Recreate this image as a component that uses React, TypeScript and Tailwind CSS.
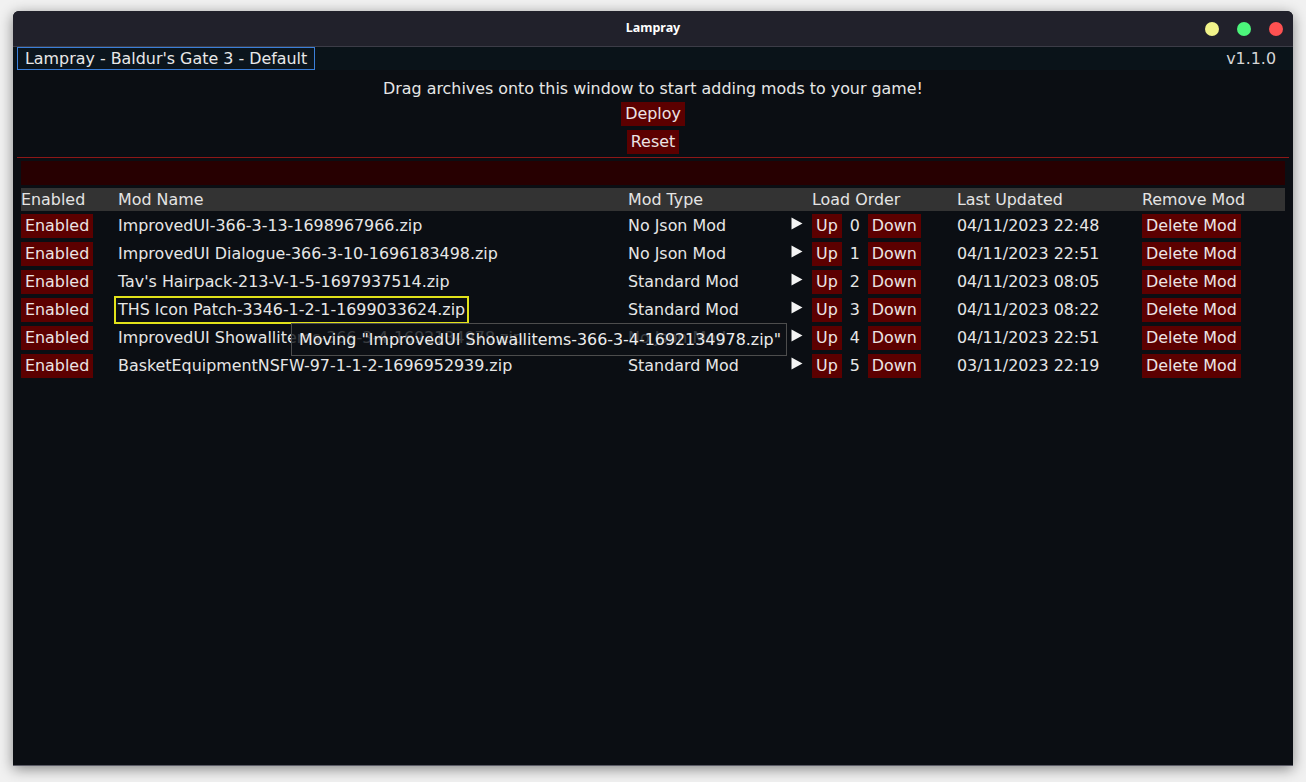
import React from "react";

const rows = [
  { name: "ImprovedUI-366-3-13-1698967966.zip", type: "No Json Mod", order: 0, date: "04/11/2023 22:48" },
  { name: "ImprovedUI Dialogue-366-3-10-1696183498.zip", type: "No Json Mod", order: 1, date: "04/11/2023 22:51" },
  { name: "Tav's Hairpack-213-V-1-5-1697937514.zip", type: "Standard Mod", order: 2, date: "04/11/2023 08:05" },
  { name: "THS Icon Patch-3346-1-2-1-1699033624.zip", type: "Standard Mod", order: 3, date: "04/11/2023 08:22" },
  { name: "ImprovedUI Showallitems-366-3-4-1692134978.zip", type: "No Json Mod", order: 4, date: "04/11/2023 22:51" },
  { name: "BasketEquipmentNSFW-97-1-1-2-1696952939.zip", type: "Standard Mod", order: 5, date: "03/11/2023 22:19" },
];

function Btn({ children }: { children: React.ReactNode }) {
  return (
    <span className="h-[24px] px-[4px] flex items-center bg-[#5c0000] text-[#ece4e4] whitespace-nowrap leading-none">
      {children}
    </span>
  );
}

const cols = "grid grid-cols-[97px_510px_163px_21px_145px_185px_143px]";

export default function App() {
  return (
    <div
      className="w-[1306px] h-[782px] bg-[#f1f1f1] pt-[11px] pl-[13px] overflow-hidden"
      style={{ fontFamily: '"DejaVu Sans", "Liberation Sans", sans-serif' }}
    >
      <div className="w-[1280px] h-[755px] rounded-t-[6px] bg-[#0b0e13] shadow-[0_3px_14px_rgba(0,0,0,0.45)] border-b border-[#5b5b66] flex flex-col overflow-hidden">
        {/* title bar */}
        <div className="h-[36px] bg-[#21212b] border-b border-[#3c3c47] relative flex items-center justify-center shrink-0">
          <span
            className="text-white text-[12.5px] font-bold"
            style={{ fontFamily: '"Noto Sans", Inter, sans-serif' }}
          >
            Lampray
          </span>
          <div className="absolute right-[10px] top-[11px] flex gap-[18px]">
            <span className="w-[14px] h-[14px] rounded-full bg-[#f1f38a]" />
            <span className="w-[14px] h-[14px] rounded-full bg-[#4cf57b]" />
            <span className="w-[14px] h-[14px] rounded-full bg-[#fe5151]" />
          </div>
        </div>

        {/* tab / menu bar */}
        <div className="h-[23px] bg-[#0a1319] flex items-stretch justify-between pl-[4px] pr-[17px] text-[15.9px] shrink-0">
          <div className="h-[23px] border border-[#3b7fd9] bg-[#0b151d] px-[7px] flex items-center text-[#e8e8e8] leading-none">
            Lampray - Baldur's Gate 3 - Default
          </div>
          <div className="flex items-center text-[#d6d6d6] leading-none">v1.1.0</div>
        </div>

        {/* body */}
        <div className="flex flex-col text-[15.9px] text-[#e6e6e6]">
          <div className="flex justify-center mt-[10px] h-[18px] items-center leading-none">
            Drag archives onto this window to start adding mods to your game!
          </div>
          <div className="flex justify-center mt-[4px]">
            <Btn>Deploy</Btn>
          </div>
          <div className="flex justify-center mt-[4px]">
            <Btn>Reset</Btn>
          </div>
          <div className="mx-[4px] mt-[3px] h-[1px] bg-[#8e1717]" />
          <div className="mx-[8px] mt-[3px] h-[24px] bg-[#270001]" />

          <div className="mx-[8px] mt-[3px] relative">
            {/* header */}
            <div className={`${cols} h-[23px] bg-[#333333] items-center leading-none text-[#e4e4e4]`}>
              <span>Enabled</span>
              <span>Mod Name</span>
              <span>Mod Type</span>
              <span />
              <span>Load Order</span>
              <span>Last Updated</span>
              <span>Remove Mod</span>
            </div>

            <div className="flex flex-col gap-[4px] mt-[3px]">
              {rows.map((r, i) => (
                <div key={i} className={`${cols} h-[24px] items-center leading-none`}>
                  <span className="flex">
                    <Btn>Enabled</Btn>
                  </span>
                  <span className="flex">
                    {i === 3 ? (
                      <span className="relative">
                        {r.name}
                        <span className="absolute -left-[4px] -right-[4px] -top-[6px] -bottom-[6px] border-2 border-[#e2e21a]" />
                      </span>
                    ) : (
                      <span className="whitespace-nowrap">{r.name}</span>
                    )}
                  </span>
                  <span>{r.type}</span>
                  <span className="self-start mt-[3px]">
                    <svg width="12" height="13" viewBox="0 0 12 13">
                      <polygon points="0.5,0.5 11.5,6.5 0.5,12.5" fill="#f4f4f4" />
                    </svg>
                  </span>
                  <span className="flex items-center">
                    <Btn>Up</Btn>
                    <span className="mx-[8px]">{r.order}</span>
                    <Btn>Down</Btn>
                  </span>
                  <span>{r.date}</span>
                  <span className="flex">
                    <Btn>Delete Mod</Btn>
                  </span>
                </div>
              ))}
            </div>

            {/* drag tooltip */}
            <div className="absolute left-[270px] top-[135px] w-[496px] h-[33px] border border-[#4d4d4d] bg-[#0e1116]/80 flex items-center pl-[7px] leading-none text-[#ececec] whitespace-nowrap">
              Moving "ImprovedUI Showallitems-366-3-4-1692134978.zip"
            </div>
          </div>
        </div>
      </div>
    </div>
  );
}
